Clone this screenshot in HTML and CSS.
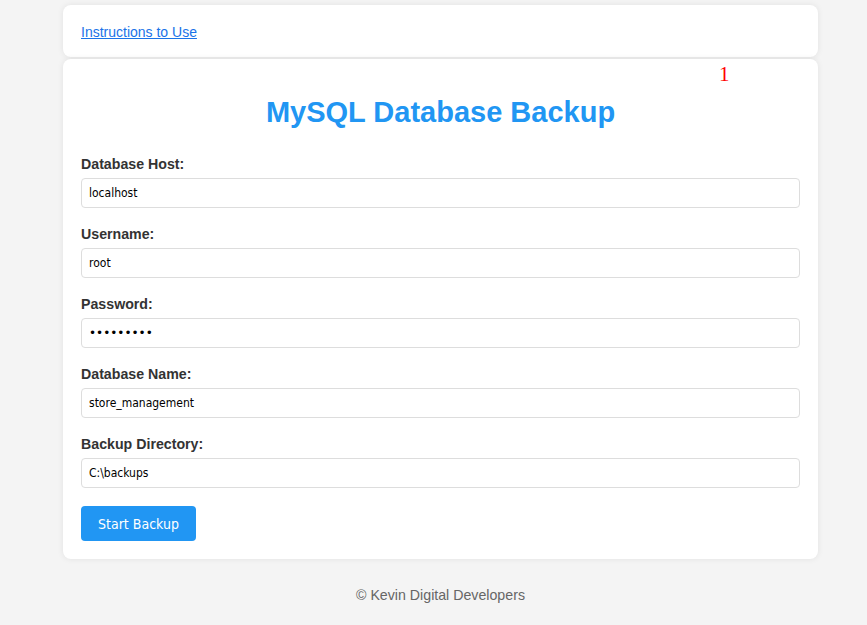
FILE: index.html
```html
<!DOCTYPE html>
<html>
<head>
<meta charset="utf-8">
<link rel="stylesheet" href="styles.css">
</head>
<body>
<div class="wrap">
  <div class="card top-card">
    <a href="#" class="link">Instructions to Use</a>
  </div>
  <div class="card main-card">
    <span class="badge">1</span>
    <h1 class="title">MySQL Database Backup</h1>
    <form class="form">
      <div class="group">
        <label class="label">Database Host:</label>
        <input class="input" type="text" value="localhost">
      </div>
      <div class="group">
        <label class="label">Username:</label>
        <input class="input" type="text" value="root">
      </div>
      <div class="group">
        <label class="label">Password:</label>
        <input class="input input-pass" type="password" value="secret123">
      </div>
      <div class="group">
        <label class="label">Database Name:</label>
        <input class="input" type="text" value="store_management">
      </div>
      <div class="group">
        <label class="label">Backup Directory:</label>
        <input class="input" type="text" value="C:\backups">
      </div>
      <button type="button" class="btn">Start Backup</button>
    </form>
  </div>
  <footer class="footer">© Kevin Digital Developers</footer>
</div>
</body>
</html>
```
FILE: styles.css
```css
html, body {
  margin: 0;
  padding: 0;
}
body {
  background: #f4f4f4;
  font-family: "Liberation Sans", Arial, sans-serif;
  padding-left: 14px;
}
.wrap {
  width: 755px;
  margin: 0 auto;
  padding-top: 5px;
}
.card {
  background: #fff;
  border-radius: 8px;
  box-shadow: 0 0 6px rgba(0,0,0,0.08);
}
.top-card {
  padding: 19px 18px 17px;
  line-height: 16px;
  font-size: 14px;
}
.link {
  color: #1a73e8;
  text-decoration: underline;
}
.main-card {
  position: relative;
  margin-top: 2px;
  padding: 20px 18px 18px;
}
.badge {
  position: absolute;
  left: 656px;
  top: 3px;
  color: red;
  font-family: "Liberation Serif", serif;
  font-size: 21px;
}
.title {
  margin: 17px 0 27px;
  text-align: center;
  color: #2196f3;
  font-size: 29px;
  line-height: 32px;
  font-weight: bold;
}
.form {
  display: flex;
  flex-direction: column;
}
.group {
  display: flex;
  flex-direction: column;
  gap: 5px;
  margin-bottom: 17px;
}
.group:last-of-type {
  margin-bottom: 18px;
}
.label {
  font-family: "Liberation Sans", Arial, sans-serif;
  font-weight: bold;
  font-size: 14.2px;
  line-height: 18px;
  color: #333;
}
.input {
  box-sizing: border-box;
  height: 30px;
  width: 100%;
  padding: 0 7px;
  border: 1px solid #ddd;
  border-radius: 4px;
  font-family: "DejaVu Sans Condensed", "DejaVu Sans", sans-serif;
  font-size: 12px;
  color: #000;
  outline: none;
}
.input-pass {
  font-family: "DejaVu Sans", sans-serif;
  font-size: 12px;
}
.btn {
  align-self: flex-start;
  width: 115px;
  height: 35px;
  background: #2196f3;
  color: #fff;
  border: none;
  border-radius: 4px;
  font-family: "DejaVu Sans Condensed", "DejaVu Sans", sans-serif;
  font-size: 14px;
  padding: 0;
}
.footer {
  margin-top: 28px;
  text-align: center;
  color: #666;
  font-size: 14.2px;
  line-height: 16px;
}
```
